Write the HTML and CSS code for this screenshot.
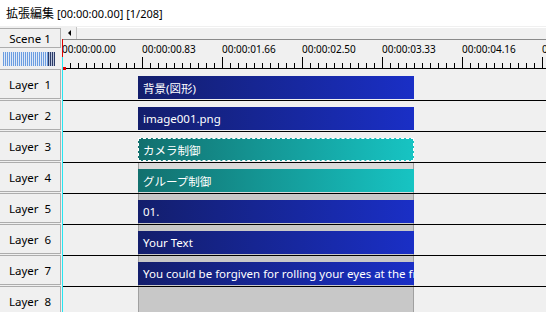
FILE: index.html
```html
<!DOCTYPE html>
<html>
<head>
<meta charset="utf-8">
<link rel="stylesheet" href="styles.css">
</head>
<body>
<div class="app">
  <div class="title"><span class="ja">拡張編集</span> [00:00:00.00] [1/208]</div>
  <div class="main">
    <div class="side">
      <div class="scene-btn">Scene 1</div>
      <div class="stripes"></div>
      <div class="layer-btn">Layer  1</div>
      <div class="layer-btn">Layer  2</div>
      <div class="layer-btn">Layer  3</div>
      <div class="layer-btn">Layer  4</div>
      <div class="layer-btn">Layer  5</div>
      <div class="layer-btn">Layer  6</div>
      <div class="layer-btn">Layer  7</div>
      <div class="layer-btn">Layer  8</div>
    </div>
    <div class="timeline">
      <div class="scroll"><div class="arrow"><span class="tri"></span></div><div class="track"></div></div>
      <div class="ruler">
        <div class="labels">
          <span>00:00:00.00</span><span>00:00:00.83</span><span>00:00:01.66</span><span>00:00:02.50</span><span>00:00:03.33</span><span>00:00:04.16</span><span>00:00:05.00</span>
        </div>
        <div class="ticks"></div>
      </div>
      <div class="row"><div class="clip blue"><span class="ja">背景(図形)</span></div></div>
      <div class="row"><div class="clip blue">image001.png</div></div>
      <div class="row"><div class="clip teal selected"><span class="ja">カメラ制御</span></div></div>
      <div class="row"><div class="range light"><div class="clip teal"><span class="ja">グループ制御</span></div></div></div>
      <div class="row"><div class="range"><div class="clip blue">01.</div></div></div>
      <div class="row"><div class="range"><div class="clip blue">Your Text</div></div></div>
      <div class="row"><div class="range"><div class="clip blue">You could be forgiven for rolling your eyes at the frequent claims</div></div></div>
      <div class="row"><div class="range"></div></div>
      <div class="cursor"></div>
    </div>
  </div>
</div>
</body>
</html>
```
FILE: styles.css
```css
html, body {
  margin: 0;
  background: #f0f0f0;
  font-family: "Noto Sans", "Noto Sans CJK JP", sans-serif;
  font-size: 11px;
  color: #000;
  overflow: hidden;
}
.app {
  width: 546px;
  height: 312px;
  overflow: hidden;
}
.title {
  height: 26px;
  box-sizing: border-box;
  background: #ffffff;
  padding-left: 6px;
  display: flex;
  align-items: center;
  font-size: 11px;
  white-space: pre;
}
.title .ja { font-size: 12px; }
.main {
  display: flex;
  height: 286px;
}
.side {
  width: 61px;
  margin-right: 1px;
  flex: none;
}
.scene-btn {
  margin-top: 2px;
  height: 20px;
  box-sizing: border-box;
  border: 1px solid #adadad;
  border-left: none;
  display: flex;
  align-items: center;
  justify-content: center;
  font-size: 11.5px;
}
.stripes {
  margin: 4px 0 3px 3px;
  width: 52px;
  height: 14px;
  background:
    repeating-linear-gradient(90deg, #2b3a66 0 1px, #b9c4da 1px 2px) 45px 0 / 7px 100% no-repeat,
    repeating-linear-gradient(90deg, #6b9de0 0 1px, #dfe9f7 1px 2px) 0 0 / 45px 100% no-repeat;
}
.layer-btn {
  height: 30px;
  margin-bottom: 1px;
  box-sizing: border-box;
  border: 1px solid #adadad;
  border-left: none;
  display: flex;
  align-items: center;
  justify-content: center;
  white-space: pre;
  font-size: 11.5px;
}
.timeline {
  flex: 1;
  position: relative;
  min-width: 0;
}
.scroll {
  height: 13px;
  display: flex;
  border-bottom: 1px solid #8a8a8a;
}
.arrow {
  width: 15px;
  margin-top: 1px;
  box-sizing: border-box;
  border-right: 1px solid #c4c4c4;
  background: #f0f0f0;
  display: flex;
  align-items: center;
  justify-content: center;
}
.tri {
  width: 0;
  height: 0;
  border-right: 3px solid #000;
  border-top: 3px solid transparent;
  border-bottom: 3px solid transparent;
}
.track {
  flex: 1;
  margin-top: 1px;
  border-top: 1px solid #ffffff;
  background: #f0f0f0;
}
.ruler {
  height: 30px;
}
.labels {
  height: 17px;
  box-sizing: border-box;
  padding-top: 3px;
  display: flex;
  font-size: 10px;
  line-height: 12px;
  white-space: nowrap;
}
.labels span {
  flex: none;
  width: 80px;
}
.ticks {
  height: 12px;
  background:
    linear-gradient(#000, #000) 0 100% / 100% 1px no-repeat,
    repeating-linear-gradient(90deg, #000 0 1px, transparent 1px 80px) 0 0 / 100% 11px no-repeat,
    repeating-linear-gradient(90deg, #000 0 1px, transparent 1px 8px) 0 6px / 100% 5px no-repeat;
}
.row {
  height: 30px;
  border-bottom: 1px solid #000;
  display: flex;
  align-items: flex-start;
}
.row > .clip {
  margin: 6px 0 0 76px;
}
.clip {
  width: 276px;
  height: 23px;
  box-sizing: border-box;
  padding-left: 5px;
  display: flex;
  align-items: center;
  color: #fff;
  white-space: nowrap;
  overflow: hidden;
  font-size: 11.5px;
}
.clip .ja { font-size: 11.5px; }
.blue {
  background: linear-gradient(90deg, #131e6c, #1a2fc6);
}
.teal {
  background: linear-gradient(90deg, #12706e, #17c4c3);
}
.selected {
  outline: 1px dashed #ffffff;
  outline-offset: -1px;
}
.range {
  margin-left: 76px;
  width: 276px;
  height: 30px;
  padding-top: 6px;
  box-sizing: border-box;
  background: linear-gradient(90deg, #a0a0a0 0 1px, #c8c8c8 1px calc(100% - 1px), #a0a0a0 calc(100% - 1px));
}
.range.light {
  background: linear-gradient(90deg, #a0a0a0 0 1px, #dadada 1px calc(100% - 1px), #a0a0a0 calc(100% - 1px));
}
.cursor {
  position: absolute;
  left: 0;
  top: 13px;
  bottom: 0;
  width: 1px;
  background: linear-gradient(#e00000 0 18px, #25e6f2 18px);
}
.cursor::after {
  content: "";
  position: absolute;
  left: 1px;
  top: 28px;
  width: 3px;
  height: 3px;
  background: #e00000;
}
```
